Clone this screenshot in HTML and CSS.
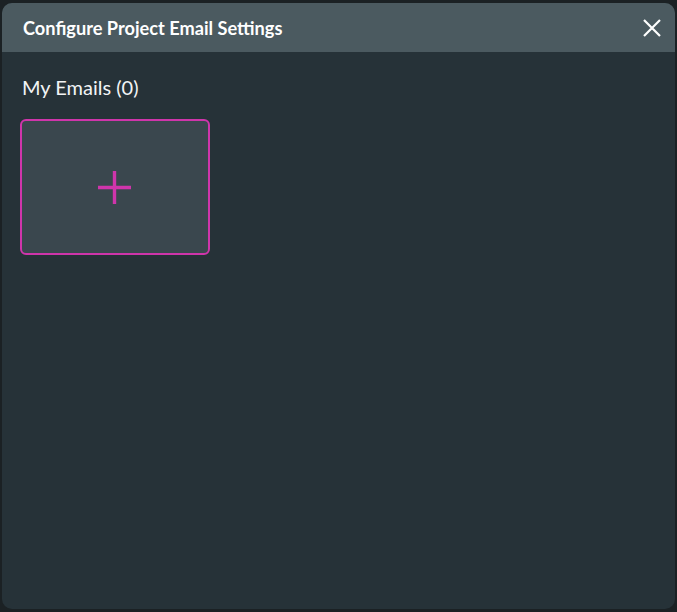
FILE: index.html
```html
<!DOCTYPE html>
<html>
<head>
<meta charset="utf-8">
<link rel="stylesheet" href="styles.css">
</head>
<body>
<div class="dialog">
  <div class="header">
    <span class="title">Configure Project Email Settings</span>
    <button class="close" aria-label="Close">
      <svg width="18" height="18" viewBox="0 0 18 18"><path d="M1 1 L17 17 M17 1 L1 17" stroke="#ffffff" stroke-width="2.2" fill="none"/></svg>
    </button>
  </div>
  <div class="body">
    <div class="section-title">My Emails (0)</div>
    <div class="cards">
      <button class="add-card" aria-label="Add email">
        <svg width="33" height="33" viewBox="0 0 33 33"><path d="M16.5 0 V33 M0 16.5 H33" stroke="#cf35ab" stroke-width="3.4" fill="none"/></svg>
      </button>
    </div>
  </div>
</div>
</body>
</html>
```

FILE: styles.css
```css
html, body {
  margin: 0;
  padding: 0;
  background: #1b2124;
}
body {
  padding: 3px 2px 3px 2px;
  font-family: Lato, "Open Sans", sans-serif;
}
.dialog {
  width: 673px;
  height: 606px;
  background: #263238;
  border-radius: 10px;
  overflow: hidden;
  display: flex;
  flex-direction: column;
}
.header {
  height: 49px;
  background: #4b5a60;
  display: flex;
  align-items: center;
  justify-content: space-between;
  padding: 0 14px 0 21px;
  flex-shrink: 0;
}
.title {
  color: #ffffff;
  font-weight: 700;
  font-size: 18.2px;
}
.close {
  background: none;
  border: none;
  padding: 0;
  width: 18px;
  height: 18px;
  display: flex;
  cursor: pointer;
}
.body {
  padding: 22px 18px;
}
.section-title {
  color: #f2f4f5;
  font-size: 20px;
  line-height: 26px;
  padding-left: 2px;
}
.cards {
  margin-top: 19px;
  display: flex;
}
.add-card {
  width: 190px;
  height: 136px;
  box-sizing: border-box;
  border: 2px solid #cf35ab;
  border-radius: 6px;
  background: #3a474e;
  display: flex;
  align-items: center;
  justify-content: center;
  padding: 0 1px 0 0;
  cursor: pointer;
}
```
